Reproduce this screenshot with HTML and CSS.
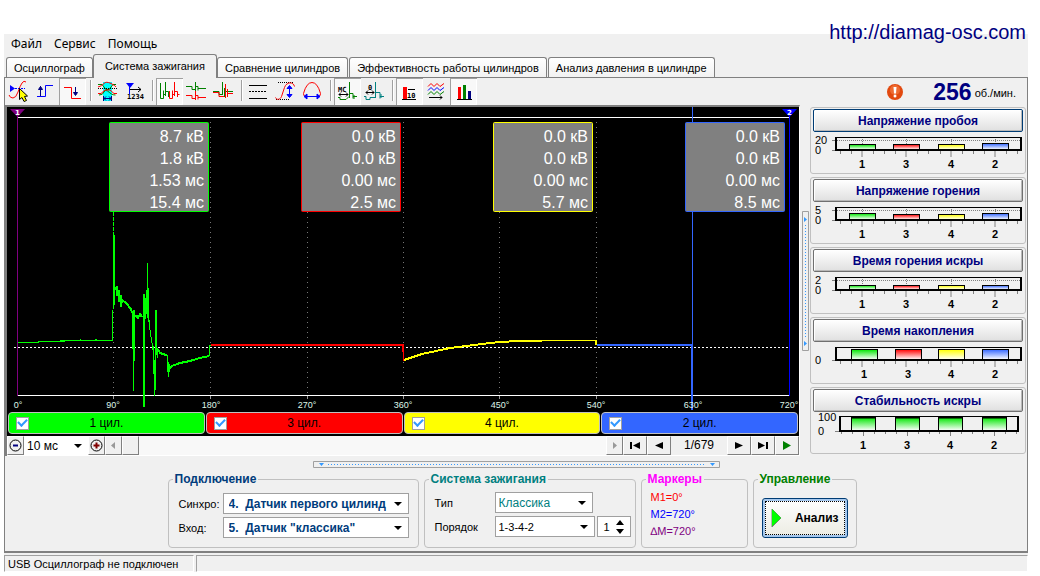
FILE: index.html
```html
<!DOCTYPE html>
<html lang="ru">
<head>
<meta charset="utf-8">
<title>Diamag</title>
<link rel="stylesheet" href="styles.css">
</head>
<body>
<svg class="defs" width="0" height="0" aria-hidden="true">
  <defs>
    <linearGradient id="g-green" x1="0" y1="0" x2="0" y2="1"><stop offset="0" stop-color="#00e600"/><stop offset="1" stop-color="#fff"/></linearGradient>
    <linearGradient id="g-red" x1="0" y1="0" x2="0" y2="1"><stop offset="0" stop-color="#f00"/><stop offset="1" stop-color="#fff"/></linearGradient>
    <linearGradient id="g-yellow" x1="0" y1="0" x2="0" y2="1"><stop offset="0" stop-color="#ff0"/><stop offset="1" stop-color="#fff"/></linearGradient>
    <linearGradient id="g-blue" x1="0" y1="0" x2="0" y2="1"><stop offset="0" stop-color="#36f"/><stop offset="1" stop-color="#fff"/></linearGradient>
    <symbol id="frame" viewBox="0 0 210 42" overflow="visible">
      <path d="M19 18.500h4M49 19v6M93 19v6M138 19v6M182 19v6M27.500 19v3M38.500 19v3M60.500 19v3M71.500 19v3M82.500 19v3M104.500 19v3M115.500 19v3M127.500 19v3M149.500 19v3M160.500 19v3M171.500 19v3M193.500 19v3M204.500 19v3" stroke="#808080" fill="none"/>
      <path d="M22 5.500H209" stroke="#000"/>
      <path d="M22 18H209M23 5V19M208 5V19" stroke="#000" fill="none" stroke-width="2"/>
    </symbol>
    <symbol id="grid" viewBox="0 0 210 42" overflow="visible">
      <path d="M19 8.500h4" stroke="#808080"/>
      <path d="M24 8.500H207M49.500 7V18M93.500 7V18M138.500 7V18M182.500 7V18" stroke="#808080" stroke-dasharray="1 1" fill="none"/>
    </symbol>
  </defs>
</svg>

<header class="top">
  <nav class="menu">
    <button type="button">Файл</button>
    <button type="button">Сервис</button>
    <button type="button">Помощь</button>
  </nav>
  <a class="site" href="#">http://diamag-osc.com</a>
</header>

<div class="app">
  <div class="tabs" role="tablist">
    <button type="button" role="tab">Осциллограф</button>
    <button type="button" role="tab" class="active" aria-selected="true">Система зажигания</button>
    <button type="button" role="tab">Сравнение цилиндров</button>
    <button type="button" role="tab">Эффективность работы цилиндров</button>
    <button type="button" role="tab">Анализ давления в цилиндре</button>
  </div>

  <main class="panel">
    <div class="toolbar">
      <button type="button" class="tool" aria-label="Курсор"><svg viewBox="0 0 27 27">
        <path d="M4 17q1 3 4 3t5-6 4-9 4-1" fill="none" stroke="#f00"/><path d="M7 10.500H20" stroke="#00f" stroke-dasharray="2 1"/><path d="M5 7v7l5-3.500z" fill="#00f"/>
        <path d="M14.500 10.500v11l2.500-2 2 4 2.500-1-2-4 3-.5z" fill="#ff0" stroke="#000"/></svg></button>
      <button type="button" class="tool" aria-label="Фронт"><svg viewBox="0 0 27 27"><path d="M5 18.500H13.500V7.500H21" fill="none" stroke="#00f"/><path d="M8.500 8V18M6.500 11.500l2-3 2 3z" stroke="#000080" fill="#000080"/></svg></button>
      <button type="button" class="tool on" aria-label="Спад"><svg viewBox="0 0 27 27"><path d="M5 9.500H12.500V20.500H22" fill="none" stroke="#f00"/><path d="M16.500 9V17M14.500 14.500l2 3 2-3z" stroke="#000080" fill="#000080"/></svg></button>
      <i class="sep"></i>
      <button type="button" class="tool" aria-label="Синхронизация"><svg viewBox="0 0 27 27"><path d="M9 4h9v19H9z" fill="#0ff"/><path d="M4 6.500h4l4 5h3l4-5h3M5 17q4 0 5-3t3.500-1 4 3 4 1" fill="none" stroke="#008000"/><path d="M4 9q4-1 6-3.500t7 0T22 9M4 15.500h3l4-3.500h5l4 3.500h3" fill="none" stroke="#f00"/><path d="M4 10.500H23" stroke="#000" stroke-dasharray="1 1"/><path d="M9.500 18v5M17.500 18v5M10 20.500h7M12 18.500l-2 2 2 2M15 18.500l2 2-2 2" fill="none" stroke="#000080"/></svg></button>
      <button type="button" class="tool" aria-label="Отсчёт"><svg viewBox="0 0 27 27"><path d="M5 5h8L9 10z" fill="#00f"/><path d="M8.500 8V16" stroke="#00f"/><path d="M9 11.500H20M17 9l3 2.500-3 2.500" fill="none" stroke="#000"/><text x="6" y="21" class="tiny">1234</text></svg></button>
      <i class="sep"></i>
      <button type="button" class="tool on" aria-label="Вид: подряд"><svg viewBox="0 0 27 27"><path d="M4.500 5V20.500H7.500V12.500M7.500 16.500H9.500M9.500 4V18M9.500 13.500H12.500V19" fill="none" stroke="#008000"/><path d="M13.500 13V20.500H16.500V12.500M16.500 16.500H18.500M18.500 4V18M18.500 13.500H21.500V19M21.500 16.500H23.500" fill="none" stroke="#f00"/></svg></button>
      <button type="button" class="tool" aria-label="Вид: один под другим"><svg viewBox="0 0 27 27"><path d="M3 8.500h6v3h3M12.500 4V13M12 8.500h3v4M15 10.500h8" fill="none" stroke="#008000"/><path d="M3 17.500h6v3h3M12.500 13V22M12 17.500h3v4M15 19.500h8" fill="none" stroke="#f00"/></svg></button>
      <button type="button" class="tool" aria-label="Вид: наложение"><svg viewBox="0 0 27 27"><path d="M3 13.500h6v3h4M12.500 4V17M14.500 10v9M14 13.500h9" fill="none" stroke="#008000"/><path d="M3 14.500h6v4h5M15.500 6V20M17.500 11v8M17 15.500h6" fill="none" stroke="#f00"/></svg></button>
      <i class="sep"></i>
      <button type="button" class="tool" aria-label="Линии"><svg viewBox="0 0 27 27"><path d="M4 7.500H22M4 20.500H22" stroke="#000"/><path d="M4 13.500H22" stroke="#000" stroke-dasharray="2 1"/></svg></button>
      <button type="button" class="tool" aria-label="Амплитуда"><svg viewBox="0 0 27 27"><path d="M6 4.500H21M4 21.500H18" stroke="#000" stroke-dasharray="1 1"/><path d="M3.500 19.500c1 3 5 2 6-1l3-9c2-6 9-6 10-1" fill="none" stroke="#f00"/><path d="M17.500 8V19M15 10.500l2.500-3 2.500 3zM15 16.500l2.500 3 2.500-3z" stroke="#00f" fill="#00f"/></svg></button>
      <button type="button" class="tool" aria-label="Длительность"><svg viewBox="0 0 27 27"><path d="M6.500 18.500q-2 0-2-3q3-11 8.500-11t8.500 11q0 3-2 3" fill="none" stroke="#f00"/><path d="M6 18.500H20M8 16l-3 2.500 3 2.500zM18 16l3 2.500-3 2.500z" stroke="#00f" fill="#00f"/></svg></button>
      <i class="sep"></i>
      <button type="button" class="tool on" aria-label="Время"><svg viewBox="0 0 27 27"><text x="4" y="14" class="tiny">МС</text><path d="M5 16.500h9M7 14.500l-2 2 2 2M12 14.500l2 2-2 2" fill="none" stroke="#000"/><path d="M4 19.500h2v2h6l3-3M15.500 4V20M15 15.500h4v5M20 17v4M19 18.500h4" fill="none" stroke="#008000"/></svg></button>
      <button type="button" class="tool" aria-label="Угол"><svg viewBox="0 0 27 27"><text x="7" y="12" class="tiny">0</text><path d="M5 14.500h8M7 12.500l-2 2 2 2M11 12.500l2 2-2 2" fill="none" stroke="#000"/><path d="M3 18.500h2v3h4v-2h5M14.500 4V20M14 14.500h5v6M20 16v4M19 18.500h4" fill="none" stroke="#008080"/></svg></button>
      <i class="sep"></i>
      <button type="button" class="tool on" aria-label="Значения"><svg viewBox="0 0 27 27"><path d="M7 9h4v12H7z" fill="#f00"/><path d="M6 21.500H20M12 11.500h7" stroke="#000"/><text x="11" y="20" class="tiny">10</text></svg></button>
      <button type="button" class="tool" aria-label="Осциллограммы"><svg viewBox="0 0 27 27"><path d="M5 8.500l3-3 3 3 3-3 3 3 4-3" fill="none" stroke="#f00"/><path d="M5 12.500l3-3 3 3 3-3 3 3 4-3" fill="none" stroke="#00f"/><path d="M5 16.500l3-3 3 3 3-3 3 3 4-3" fill="none" stroke="#008000"/><path d="M6 19.500H19M17 17.500l2 2-2 2" fill="none" stroke="#000"/></svg></button>
      <button type="button" class="tool on" aria-label="Гистограммы"><svg viewBox="0 0 27 27"><path d="M8 9h3v12H8z" fill="#f00"/><path d="M13 7h3v14h-3z" fill="#008000"/><path d="M18 13h3v8h-3z" fill="#000080"/><path d="M7 21.500H22" stroke="#000"/></svg></button>
      <div class="rpm">
        <svg class="alert" viewBox="0 0 16 16" aria-label="Ошибка"><circle cx="8" cy="8" r="8" fill="#e2490f"/><circle cx="8" cy="6" r="5" fill="#ee6b32"/><path d="M6.500 3h3L9 9.500H7z" fill="#fff"/><circle cx="8" cy="12" r="1.500" fill="#fff"/></svg>
        <strong>256</strong><span>об./мин.</span>
      </div>
    </div>

    <div class="work">
      <section class="scope">
        <svg class="plot" viewBox="7 107 792 305" role="img" aria-label="Осциллограмма зажигания">
          <g stroke="#777" stroke-dasharray="1 4"><path d="M113.500 122V395M210.500 122V395M307.500 122V395M403.500 122V395M499.500 122V395M596.500 122V395M692.500 122V395"/></g>
          <path d="M113.500 395v4M210.500 395v4M307.500 395v4M403.500 395v4M499.500 395v4M596.500 395v4M692.500 395v4" stroke="#999"/>
          <path d="M18 117.500H790M18 395.500H790" stroke="#fff"/>
          <path d="M14 347.500H790" stroke="#fff" stroke-dasharray="2 2"/>
          <path d="M17.500 115V396" stroke="#800080"/><path d="M10 109H25L17.500 117z" fill="#800080"/>
          <path d="M789.500 115V396" stroke="#00f"/><path d="M782 109H797L789.500 117z" fill="#00f"/>
          <text x="15" y="115" class="flag">1</text><text x="787" y="115" class="flag">2</text>
          <path d="M113.500 212V236" stroke="#0f0" stroke-dasharray="4 1"/>
          <g class="trace" fill="none" stroke="#0f0">
            <path d="M18 342.500L38 342M38 341.500H65M60 340.500H112.500V310M113.500 309V235M114.500 235V305M147.500 263V318" />
            <path d="M38 342.500v-1M18 342.500H38M65 340.500h6M80 339.500h1M95 339.500h2" />
            <path d="M115 290L117 286V296L119 290V302L121 295V307L122 300L126 303L131 309L132 313" stroke-width="2"/>
            <path d="M132.500 313V349M133.500 310V391M134.500 310V361M135 316H141L142 314"/>
            <path d="M136 315L138 318L140 314L142 317" stroke-width="2"/>
            <path d="M143.500 294V407M144.500 294V407M145.500 298V319M146.500 290V314M148.500 288V322M149 320L150 330L153 350"/>
            <path d="M153.500 346V374M154.500 360V396M155.500 310V390M156.500 310V355M157.500 348V358"/>
            <path d="M157 348L160 353L166 355L167 356" stroke-width="2"/>
            <path d="M167.500 355V372M168.500 362V377M169.500 364V372"/>
            <path d="M169 369L172 366L180 363L190 361L200 358L209 356" stroke-width="2"/>
            <path d="M209.500 356V345.500H211"/>
          </g>
          <path d="M211 345H403V352" fill="none" stroke="#f00" stroke-width="2"/><path d="M403.500 345V361" stroke="#f00"/>
          <path class="trace" d="M404 360l18-6 14-3 14-3 24-3 25-3 20-1 24-.5H596V345" fill="none" stroke="#ff0" stroke-width="2"/>
          <path d="M597 345H692V410" fill="none" stroke="#36f" stroke-width="2"/><path d="M692.500 107V410" stroke="#36f"/>
          <g fill="#808080"><rect x="109.500" y="122.500" width="99" height="89" rx="1" stroke="#0f0"/><rect x="301.500" y="122.500" width="99" height="89" rx="1" stroke="#f00"/><rect x="493.500" y="122.500" width="99" height="89" rx="1" stroke="#ff0"/><rect x="685.500" y="122.500" width="99" height="89" rx="1" stroke="#36f"/></g>
          <g class="val">
            <text x="204" y="142">8.7 кВ</text><text x="204" y="164">1.8 кВ</text><text x="204" y="186">1.53 мс</text><text x="204" y="208">15.4 мс</text>
            <text x="396" y="142">0.0 кВ</text><text x="396" y="164">0.0 кВ</text><text x="396" y="186">0.00 мс</text><text x="396" y="208">2.5 мс</text>
            <text x="588" y="142">0.0 кВ</text><text x="588" y="164">0.0 кВ</text><text x="588" y="186">0.00 мс</text><text x="588" y="208">5.7 мс</text>
            <text x="780" y="142">0.0 кВ</text><text x="780" y="164">0.0 кВ</text><text x="780" y="186">0.00 мс</text><text x="780" y="208">8.5 мс</text>
          </g>
          <g class="deg"><text x="18" y="408">0°</text><text x="113" y="408">90°</text><text x="211" y="408">180°</text><text x="307" y="408">270°</text><text x="403" y="408">360°</text><text x="500" y="408">450°</text><text x="596" y="408">540°</text><text x="693" y="408">630°</text><text x="789" y="408">720°</text></g>
        </svg>
        <div class="cyls">
          <label class="cyl green"><input type="checkbox" checked><span>1 цил.</span></label>
          <label class="cyl red"><input type="checkbox" checked><span>3 цил.</span></label>
          <label class="cyl yellow"><input type="checkbox" checked><span>4 цил.</span></label>
          <label class="cyl blue"><input type="checkbox" checked><span>2 цил.</span></label>
        </div>
        <div class="player">
          <button type="button" class="sq" aria-label="Уменьшить"><svg viewBox="0 0 15 15"><circle cx="7.500" cy="7.500" r="5.500" fill="none" stroke="#000"/><path d="M5 7.500h5" stroke="#000080" stroke-width="2"/></svg></button>
          <span class="drop scale"><select aria-label="Развёртка"><option>10 мс</option></select></span>
          <button type="button" class="sq" aria-label="Увеличить"><svg viewBox="0 0 15 15"><circle cx="7.500" cy="7.500" r="5.500" fill="none" stroke="#000"/><path d="M4.500 7.500h6M7.500 4.500v6" stroke="#800000" stroke-width="2"/></svg></button>
          <div class="scroll">
            <button type="button" class="sq" aria-label="Влево"><svg viewBox="0 0 15 15"><path d="M9 4v7L5 7.500z" fill="#999"/></svg></button>
            <button type="button" class="sq" aria-label="Ползунок"></button>
            <button type="button" class="sq last" aria-label="Вправо"><svg viewBox="0 0 15 15"><path d="M6 4v7l4-3.500z" fill="#999"/></svg></button>
          </div>
          <button type="button" class="nav" aria-label="В начало"><svg viewBox="0 0 16 15"><path d="M4 4v7" stroke="#000" stroke-width="2"/><path d="M13 4v7L6 7.500z"/></svg></button>
          <button type="button" class="nav" aria-label="Назад"><svg viewBox="0 0 16 15"><path d="M12 4v7L4 7.500z"/></svg></button>
          <output class="frame-no">1/679</output>
          <button type="button" class="nav" aria-label="Вперёд"><svg viewBox="0 0 16 15"><path d="M4 4v7l8-3.500z"/></svg></button>
          <button type="button" class="nav" aria-label="В конец"><svg viewBox="0 0 16 15"><path d="M12 4v7" stroke="#000" stroke-width="2"/><path d="M3 4v7l7-3.500z"/></svg></button>
          <button type="button" class="nav" aria-label="Воспроизвести"><svg viewBox="0 0 16 15"><path d="M4 3v9l8-4.500z" fill="#008000"/></svg></button>
        </div>
      </section>

      <div class="vsplit"><svg viewBox="0 0 7 140"><path d="M.5.500h6v139h-6z" fill="none" stroke="#a0a0a0"/><path d="M2 6v5l3-2.500zM2 130v5l3-2.500z" fill="#39f"/><path d="M3.500 14V126" stroke="#39f" stroke-dasharray="1 2"/></svg></div>

      <aside class="side">
        <section class="card">
          <button type="button" class="focus">Напряжение пробоя</button>
          <svg viewBox="0 0 210 42"><use href="#grid" width="210" height="42"/>
            <g stroke="#000"><rect x="36.500" y="12.500" width="26" height="5" fill="url(#g-green)"/><rect x="80.500" y="12.500" width="26" height="5" fill="url(#g-red)"/><rect x="125.500" y="12.500" width="26" height="5" fill="url(#g-yellow)"/><rect x="169.500" y="11.500" width="26" height="6" fill="url(#g-blue)"/></g>
            <use href="#frame" width="210" height="42"/><text x="2" y="12">20</text><text x="2" y="22">0</text>
            <g class="n"><text x="49" y="36">1</text><text x="93" y="36">3</text><text x="138" y="36">4</text><text x="182" y="36">2</text></g></svg>
        </section>
        <section class="card">
          <button type="button">Напряжение горения</button>
          <svg viewBox="0 0 210 42"><use href="#grid" width="210" height="42"/>
            <g stroke="#000"><rect x="36.500" y="11.500" width="26" height="6" fill="url(#g-green)"/><rect x="80.500" y="12.500" width="26" height="5" fill="url(#g-red)"/><rect x="125.500" y="12.500" width="26" height="5" fill="url(#g-yellow)"/><rect x="169.500" y="11.500" width="26" height="6" fill="url(#g-blue)"/></g>
            <use href="#frame" width="210" height="42"/><text x="2" y="12">5</text><text x="2" y="22">0</text>
            <g class="n"><text x="49" y="36">1</text><text x="93" y="36">3</text><text x="138" y="36">4</text><text x="182" y="36">2</text></g></svg>
        </section>
        <section class="card">
          <button type="button">Время горения искры</button>
          <svg viewBox="0 0 210 42"><use href="#grid" width="210" height="42"/>
            <g stroke="#000"><rect x="36.500" y="13.500" width="26" height="4" fill="url(#g-green)"/><rect x="80.500" y="13.500" width="26" height="4" fill="url(#g-red)"/><rect x="125.500" y="13.500" width="26" height="4" fill="url(#g-yellow)"/><rect x="169.500" y="13.500" width="26" height="4" fill="url(#g-blue)"/></g>
            <use href="#frame" width="210" height="42"/><text x="2" y="12">2</text><text x="2" y="22">0</text>
            <g class="n"><text x="49" y="36">1</text><text x="93" y="36">3</text><text x="138" y="36">4</text><text x="182" y="36">2</text></g></svg>
        </section>
        <section class="card">
          <button type="button">Время накопления</button>
          <svg viewBox="0 0 210 42">
            <g stroke="#000"><rect x="38.500" y="7.500" width="26" height="10" fill="url(#g-green)"/><rect x="82.500" y="7.500" width="26" height="10" fill="url(#g-red)"/><rect x="125.500" y="7.500" width="26" height="10" fill="url(#g-yellow)"/><rect x="169.500" y="7.500" width="26" height="10" fill="url(#g-blue)"/></g>
            <use href="#frame" width="210" height="42"/><text x="2" y="22">0</text>
            <g class="n"><text x="51" y="36">1</text><text x="95" y="36">3</text><text x="138" y="36">4</text><text x="182" y="36">2</text></g></svg>
        </section>
        <section class="card">
          <button type="button">Стабильность искры</button>
          <svg viewBox="0 0 210 42">
            <g fill="url(#g-green)" stroke="#000"><rect x="38.500" y="5.500" width="24" height="13"/><rect x="82.500" y="5.500" width="24" height="13"/><rect x="125.500" y="5.500" width="24" height="13"/><rect x="169.500" y="5.500" width="24" height="13"/></g>
            <path d="M26 4.500H206" stroke="#000"/>
            <path d="M26 19H206M27 4V20M205 4V20M38 5.500h25M82 5.500h25M125 5.500h25M169 5.500h25" stroke="#000" stroke-width="2" fill="none"/>
            <path d="M22 19.500h4M50.500 20v4M94.500 20v4M137.500 20v4M181.500 20v4M28.500 20v2M39.500 20v2M61.500 20v2M72.500 20v2M83.500 20v2M105.500 20v2M116.500 20v2M126.500 20v2M148.500 20v2M159.500 20v2M170.500 20v2M192.500 20v2M203.500 20v2" stroke="#808080"/>
            <text x="5" y="9">100</text><text x="5" y="23">0</text>
            <g class="n"><text x="50" y="37">1</text><text x="94" y="37">3</text><text x="137" y="37">4</text><text x="181" y="37">2</text></g></svg>
        </section>
      </aside>
    </div>

    <div class="hsplit"><svg viewBox="0 0 407 7"><path d="M.5.500h406v6H.5z" fill="none" stroke="#a0a0a0"/><path d="M6 2h5l-2.500 3zM397 2h5l-2.500 3z" fill="#39f"/><path d="M15 3.500H393" stroke="#39f" stroke-dasharray="1 2"/></svg></div>

    <form class="groups">
      <fieldset class="conn">
        <legend>Подключение</legend>
        <label for="sync">Синхро:</label>
        <span class="drop"><select id="sync"><option>4. &nbsp;Датчик первого цилинд</option></select></span>
        <label for="inp">Вход:</label>
        <span class="drop"><select id="inp"><option>5. &nbsp;Датчик "классика"</option></select></span>
      </fieldset>
      <fieldset class="ign">
        <legend>Система зажигания</legend>
        <label for="type">Тип</label>
        <span class="drop teal"><select id="type"><option>Классика</option></select></span>
        <label for="order">Порядок</label>
        <span class="pair"><span class="drop"><select id="order"><option>1-3-4-2</option></select></span>
        <span class="spin"><input type="text" value="1" aria-label="Номер цилиндра"><svg viewBox="0 0 8 14"><path d="M0 5h8L4 0zM0 9h8l-4 5z"/></svg></span></span>
      </fieldset>
      <fieldset class="marks">
        <legend>Маркеры</legend>
        <p class="m1">M1=0°</p><p class="m2">M2=720°</p><p class="dm">∆M=720°</p>
      </fieldset>
      <fieldset class="ctrl">
        <legend>Управление</legend>
        <button type="button" class="run"><svg viewBox="0 0 12 20"><path d="M1 1v18l9-9z" fill="#0f0" stroke="#7a7a7a"/><path d="M1 1v17l9-8z" fill="#0f0"/></svg><span>Анализ</span></button>
      </fieldset>
    </form>
  </main>

  <footer class="status"><span>USB Осциллограф не подключен</span><span></span></footer>
</div>
</body>
</html>
```
FILE: styles.css
```css
* { box-sizing: border-box; }
body { margin: 0; background: #fff; color: #000; font: 12px/14px "Liberation Sans", Arial, sans-serif; }
button, select, input { font: inherit; color: inherit; margin: 0; padding: 0; }
svg { display: block; }
.defs { position: absolute; }
.top { display: flex; justify-content: space-between; align-items: flex-end; height: 54px; margin: 0 12px 0 4px; padding: 0 2px 2px 0; background: linear-gradient(#fff 34px, #f0f0f0 34px); }
.menu { display: flex; gap: 12px; padding-left: 7px; font: 12px/16px "Noto Sans", sans-serif; }
.menu button { border: 0; background: none; }
.site { align-self: flex-start; padding-top: 20px; font-size: 20px; line-height: 24px; color: #000080; text-decoration: none; }
.app { margin: 0 12px 0 4px; background: #f0f0f0; }

.tabs { display: flex; align-items: flex-end; height: 23px; padding-left: 2px; gap: 1px; }
.tabs button { height: 20px; padding: 0 7px; border: 1px solid #808080; border-bottom: 0; border-radius: 3px 3px 0 0; background: linear-gradient(#fff, #f2f2f2); white-space: nowrap; font-size: 11px; }
.tabs .active { height: 24px; margin: 0 -1px -1px; padding: 0 11px 1px; background: #f0f0f0; z-index: 1; }
.panel { border: 1px solid #808080; border-bottom-width: 2px; padding-bottom: 3px; }

.toolbar { display: flex; height: 27px; }
.tool { width: 27px; height: 27px; border: 0; background: none; flex: none; }
.tool svg { width: 27px; height: 27px; }
.tool.on { background: #f8f8f8; box-shadow: inset 1px 1px #a0a0a0, inset -1px -1px #fff; }
.sep { width: 8px; flex: none; background: linear-gradient(90deg, transparent 4px, #a0a0a0 4px, #a0a0a0 5px, #fff 5px, #fff 6px, transparent 6px); margin: 2px 0 4px; }
.tiny { font: bold 7px "DejaVu Sans Mono", monospace; }
.rpm { display: flex; align-items: center; margin-left: auto; padding-right: 11px; white-space: nowrap; }
.alert { width: 16px; height: 16px; margin-right: 30px; }
.rpm strong { font-size: 23px; line-height: 26px; color: #000080; margin-right: 3px; }
.rpm span { font-size: 11px; padding-top: 3px; }

.work { display: grid; grid-template-columns: minmax(0, 1fr) 10px 217px; }
.scope { border-top: 2px solid #808080; border-left: 2px solid #808080; border-right: 1px solid #fff; background: #000; }
.plot { width: 100%; height: auto; }
.trace { shape-rendering: crispEdges; }
.val { font-size: 16px; fill: #fff; text-anchor: end; }
.deg { font-size: 9px; fill: #dff5e8; text-anchor: middle; }
.flag { font: bold 7px "DejaVu Sans", sans-serif; fill: #fff; }
.cyls { display: grid; grid-template-columns: repeat(4, 1fr); gap: 1px; padding: 0 1px 2px; }
.cyl { display: flex; align-items: center; height: 22px; padding: 0 7px; border: 1px solid #c0c0c0; border-radius: 4px; color: #000; }
.cyl span { flex: 1; text-align: center; padding-right: 13px; }
.cyl input { appearance: none; width: 13px; height: 13px; background: #fff; border: 1px solid #a0a0a0; display: grid; place-items: center; }
.cyl input:checked::before { content: ""; width: 7px; height: 4px; border: solid #3399ff; border-width: 0 0 2px 2px; transform: rotate(-45deg) translate(1px, -1px); }
.green { background: #0f0; } .red { background: #f00; } .yellow { background: #ff0; } .blue { background: #36f; }
.player { display: flex; height: 20px; background: #f0f0f0; border-bottom: 1px solid #fff; }
.sq, .nav { display: grid; place-items: center; flex: none; width: 17px; height: 19px; background: #f0f0f0; border: 1px solid; border-color: #fff #808080 #808080 #fff; }
.nav { width: 24px; }
.sq svg { width: 15px; height: 15px; } .nav svg { width: 16px; height: 15px; }
.scroll { display: flex; flex: 1; background: #f8f8f8; }
.last { margin-left: auto; }
.frame-no { width: 56px; text-align: center; line-height: 19px; font-size: 12px; }

.drop { position: relative; display: block; background: #fff; border: 1px solid #a0a0a0; height: 21px; }
.drop select { appearance: none; display: block; width: 100%; height: 100%; border: 0; background: none; padding: 0 18px 0 3px; }
.drop::after { content: ""; position: absolute; right: 6px; top: 8px; border: 4px solid transparent; border-top-color: #000; border-bottom: 0; pointer-events: none; }
.scale { width: 64px; height: 19px; border: 0; flex: none; }

.vsplit { display: grid; place-items: center; background: #f0f0f0; }
.vsplit svg { width: 7px; height: 140px; }
.side { display: grid; gap: 3px; align-content: start; padding: 2px 1px 0 0; }
.card { height: 67px; border: 1px solid #c0c0c0; border-radius: 3px; padding: 1px 2px 0; }
.card button { display: block; width: 100%; height: 23px; border: 1px solid #707070; box-shadow: inset 1px 1px #fff, inset -1px -1px #b8b8b8; border-radius: 2px; background: linear-gradient(#fff, #e0e0e0); color: #000080; font-weight: bold; }
.card .focus { border-color: #003c74; }
.card svg { width: 100%; height: 42px; font-size: 11px; overflow: visible; }
.n { font-weight: bold; text-anchor: middle; }

.hsplit { display: grid; place-items: center; height: 17px; }
.hsplit svg { width: 407px; height: 7px; }
.groups { display: flex; justify-content: center; gap: 5px; padding-right: 8px; font-size: 11px; }
fieldset { min-width: 0; height: 75px; margin: 0; padding: 8px 9px 0 10px; border: 1px solid #c0c0c0; border-radius: 4px; }
legend { margin-left: -6px; padding: 0 2px; font: bold 12px/12px "Liberation Sans", sans-serif; white-space: nowrap; }
.conn { width: 251px; display: grid; grid-template-columns: 43px 1fr; gap: 3px 1px; align-items: center; align-content: start; }
.conn legend, .conn select { color: #003c7c; font-weight: bold; font-size: 12px; }
.conn select { padding-left: 5px; }
.ign { width: 212px; display: grid; grid-template-columns: 60px 1fr; gap: 3px 0; align-items: center; align-content: start; padding-right: 4px; padding-top: 7px; }
.ign legend, .teal { color: #008080; }
.teal { width: 98px; font-size: 12px; }
.pair { display: flex; gap: 2px; } .pair .drop { width: 100px; }
.spin { display: flex; align-items: center; flex: 1; padding-right: 6px; background: #fff; border: 1px solid #a0a0a0; }
.spin input { width: 100%; min-width: 0; border: 0; background: none; text-align: center; }
.spin svg { width: 8px; height: 14px; flex: none; }
.marks { width: 107px; padding: 4px 9px 0; } .marks legend { color: #f0f; margin-left: -5px; }
.marks p { margin: 0; line-height: 17px; } .m1 { color: #f00; } .m2 { color: #00f; } .dm { color: #800080; }
.ctrl { width: 104px; padding: 0 8px; } .ctrl legend { color: #008000; margin-left: -4px; }
.run { display: flex; align-items: center; justify-content: space-between; width: 100%; height: 40px; margin-top: 13px; padding: 0 8px; border: 1px solid #003c74; border-radius: 3px; box-shadow: inset 0 0 0 2px #a6c8ee; outline: 1px dotted #000; outline-offset: -4px; background: linear-gradient(#fff, #ebebe2); font-size: 12px; font-weight: bold; }
.run svg { width: 12px; height: 20px; }

.status { display: flex; gap: 2px; padding-top: 2px; font: 11px/16px "Liberation Sans", sans-serif; }
.status span { height: 17px; padding: 0 3px; border: 1px solid; border-color: #a0a0a0 #fff #fff #a0a0a0; }
.status span:first-child { width: 190px; white-space: nowrap; }
.status span:last-child { flex: 1; }
```
